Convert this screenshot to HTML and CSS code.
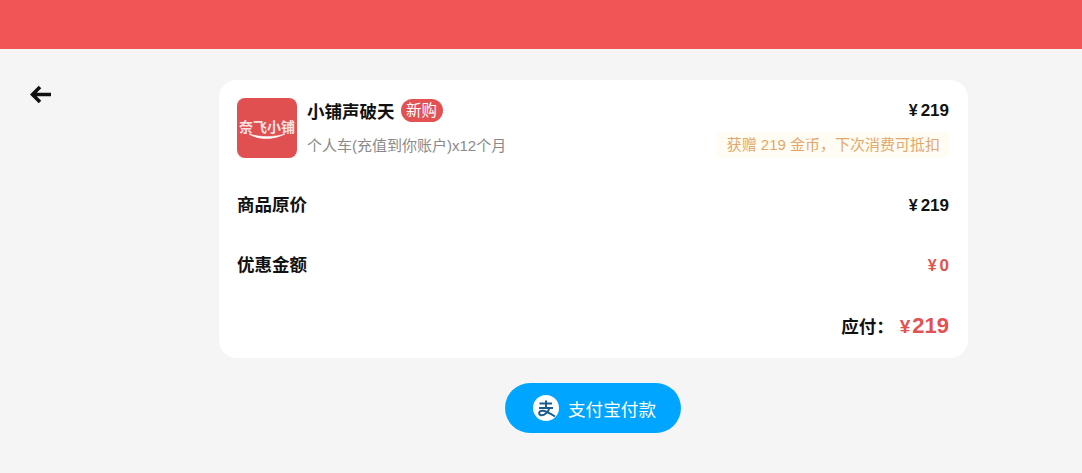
FILE: index.html
```html
<!DOCTYPE html>
<html lang="zh-CN">
<head>
    <meta charset="UTF-8">
    <meta name="viewport" content="width=device-width, initial-scale=1.0">
    <title>支付宝付款</title>
    <link rel="stylesheet" href="styles.css">
</head>
<body>
    <div class="topbar"></div>
    <div class="page">
        <div class="back-col">
            <svg class="back" width="22" height="20" viewBox="0 0 22 20">
                <path d="M10 2 L2.500 9.500 L10 17 M3 9.500 H21" fill="none" stroke="#111" stroke-width="3.600"/>
            </svg>
        </div>
        <div class="content">
            <div class="card">
                <div class="product">
                    <div class="logo">
                        <span class="logo-text">奈飞小铺</span>
                        <svg class="swoosh" width="40" height="8" viewBox="0 0 40 8">
                            <path d="M2 1 C12 7 26 7 38 1 C27 4.500 13 4.500 2 1 Z" fill="#fff" stroke="#fff" stroke-width="0.600"/>
                        </svg>
                    </div>
                    <div class="product-info">
                        <div class="row-line">
                            <div class="title-wrap">
                                <span class="title">小铺声破天</span>
                                <span class="badge">新购</span>
                            </div>
                            <span class="price"><span class="yen">¥</span>219</span>
                        </div>
                        <div class="row-line sub-line">
                            <span class="desc">个人车(充值到你账户)x12个月</span>
                            <span class="coins">获赠 219 金币，下次消费可抵扣</span>
                        </div>
                    </div>
                </div>
                <div class="row-line fee first-fee">
                    <span class="fee-name">商品原价</span>
                    <span class="price fee-price"><span class="yen">¥</span>219</span>
                </div>
                <div class="row-line fee">
                    <span class="fee-name">优惠金额</span>
                    <span class="price fee-price red"><span class="yen">¥</span>0</span>
                </div>
                <div class="total">
                    <span class="total-label">应付：</span>
                    <span class="total-price"><span class="total-yen">¥</span>219</span>
                </div>
            </div>
            <button class="pay" type="button">
                <svg width="26" height="26" viewBox="0 0 26 26">
                    <circle cx="13" cy="13" r="13" fill="#fff"/>
                    <path d="M6.500 8.500 H19 M13 5.500 V13 M6 13 H20 M16.500 13 C15 17.500 11 21 7.800 20.200 C4.800 19.300 6 15.300 10 15.800 C13 16.200 17 18.300 22 21.500" fill="none" stroke="#1b5c8f" stroke-width="2"/>
                </svg>
                <span>支付宝付款</span>
            </button>
        </div>
    </div>
</body>
</html>
```

FILE: styles.css
```css
* {
    box-sizing: border-box;
}
body {
    margin: 0;
    height: 473px;
    overflow: hidden;
    background-color: #f5f5f6;
    color: #111;
    font-family: "Liberation Sans", "Noto Sans CJK SC", sans-serif;
}
.topbar {
    height: 49px;
    background-color: #f15555;
}
.page {
    display: flex;
    padding-top: 31px;
}
.back-col {
    width: 219px;
    padding: 5px 0 0 30px;
}
.back {
    display: block;
}
.content {
    width: 749px;
}
.card {
    height: 278px;
    padding: 18px 19px 0 18px;
    background-color: #fff;
    border-radius: 18px;
}
.product {
    display: flex;
    gap: 10px;
}
.logo {
    position: relative;
    display: flex;
    justify-content: center;
    width: 60px;
    height: 60px;
    padding-top: 21px;
    flex-shrink: 0;
    background-color: #e05050;
    border-radius: 8px;
}
.logo-text {
    color: #fbe3e3;
    font-size: 14px;
    font-weight: bold;
    line-height: 16px;
    white-space: nowrap;
}
.swoosh {
    position: absolute;
    left: 10px;
    top: 35px;
}
.product-info {
    flex: 1;
}
.row-line {
    display: flex;
    justify-content: space-between;
    align-items: center;
}
.title-wrap {
    display: flex;
    align-items: center;
    gap: 6px;
    height: 24px;
}
.title {
    font-size: 17.500px;
    font-weight: bold;
}
.badge {
    padding: 0 5.500px;
    background-color: #e25252;
    border-radius: 12px;
    color: #fff;
    font-size: 15.500px;
    line-height: 23px;
}
.price {
    padding-top: 2px;
    font-size: 17px;
    font-weight: bold;
}
.fee-price {
    padding-top: 6px;
}
.yen {
    font-size: 16px;
    margin-right: 3px;
}
.red {
    color: #e25252;
}
.sub-line {
    margin-top: 8px;
}
.desc {
    color: #8a8a8a;
    font-size: 15px;
}
.coins {
    margin-top: 2px;
    padding: 3px 9px 3px 11px;
    background-color: #fffcf3;
    border-radius: 4px;
    color: #e3a76c;
    font-size: 15px;
    line-height: 20px;
}
.fee {
    height: 24px;
    margin-top: 36px;
}
.first-fee {
    margin-top: 33px;
}
.fee-name {
    font-size: 17.500px;
    font-weight: bold;
}
.total {
    display: flex;
    justify-content: flex-end;
    align-items: baseline;
    gap: 6px;
    margin-top: 38px;
}
.total-label {
    font-size: 17.500px;
    font-weight: bold;
}
.total-price {
    color: #e25252;
    font-size: 22px;
    font-weight: bold;
}
.total-yen {
    font-size: 19px;
    margin-right: 2px;
}
.pay {
    display: flex;
    align-items: center;
    gap: 9px;
    width: 176px;
    height: 50px;
    margin: 25px 0 0 286px;
    padding: 0 0 0 28px;
    background-color: #00a5ff;
    border: none;
    border-radius: 25px;
    color: #fff;
    font-family: inherit;
    font-size: 17.600px;
}
```
